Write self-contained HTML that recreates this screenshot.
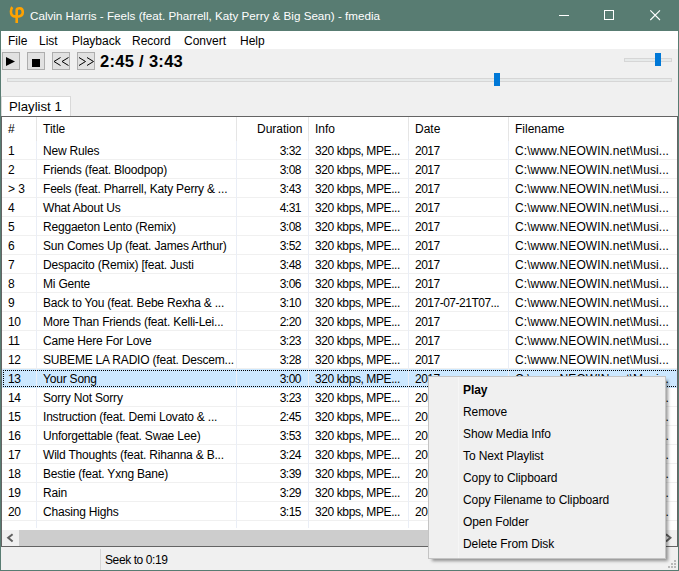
<!DOCTYPE html>
<html><head><meta charset="utf-8">
<style>
*{margin:0;padding:0;box-sizing:border-box}
html,body{width:679px;height:571px;overflow:hidden;background:#f0f0f0}
body{position:relative;font-family:"Liberation Sans",sans-serif;font-size:12px;color:#000}
.abs{position:absolute}
#win{position:absolute;left:0;top:0;width:679px;height:571px;background:#f0f0f0}
.bd{position:absolute;background:#587c72}
#title{position:absolute;left:0;top:0;width:679px;height:31px;background:#587c72}
#title .t{position:absolute;left:30px;top:8px;color:#fff;font-size:11.65px;white-space:nowrap;line-height:15px}
#menubar{position:absolute;left:1px;top:31px;width:677px;height:18px;background:#fff}
#menubar span{position:absolute;top:3px;line-height:14px;white-space:nowrap;font-size:12px}
.btn{position:absolute;top:52px;width:18px;height:18px;background:#e1e1e1;border:1px solid #adadad}
.track{position:absolute;height:4px;background:#e7eaea;border:1px solid #d6d6d6}
.thumb{position:absolute;width:6px;height:13px;background:#0078d7}
#time{position:absolute;left:100px;top:52px;font-weight:bold;font-size:16.5px;letter-spacing:0.3px;line-height:18px;white-space:nowrap}
#tab{position:absolute;left:1px;top:96px;width:70px;height:21px;background:#fff;border:1px solid #d9d9d9;border-bottom:none}
#tab span{position:absolute;left:7px;top:2px;line-height:15px;font-size:13.2px;white-space:nowrap}
#lv{position:absolute;left:1px;top:116px;width:677px;height:431px;background:#fff;border:1px solid #646464}
.hdr{position:absolute;top:123px;line-height:12px;white-space:nowrap}
.hsep{position:absolute;top:117px;width:1px;height:24px;background:#e5e5e5}
.vg{position:absolute;top:141px;width:1px;height:387px;background:#eaeef6}
#rows{position:absolute;left:2px;top:117px;width:675px;height:413px;overflow:hidden}
.row{position:absolute;left:0;width:700px;height:19px;border-bottom:1px solid #f0f0f0}
.row span{position:absolute;top:4px;line-height:12px;white-space:nowrap}
.row.sel{background:#cce8ff;border-bottom:none}
.row.sel:after{content:'';position:absolute;left:1px;top:1px;right:0;bottom:1px;border:1px dotted #000;border-radius:1px}
.c0{left:6px;letter-spacing:-0.5px} .c1{left:41px;letter-spacing:-0.2px} .c2{right:401px;letter-spacing:-0.5px} .c3{left:313px;letter-spacing:-0.4px} .c4{left:413px;letter-spacing:-0.5px} .c5{left:513px;letter-spacing:0.08px}
#hscroll{position:absolute;left:2px;top:530px;width:675px;height:16px;background:#f0f0f0}
#hthumb{position:absolute;left:17px;top:0;width:640px;height:16px;background:#cdcdcd}
#status{position:absolute;left:1px;top:547px;width:677px;height:23px;background:#f0f0f0}
#ssep{position:absolute;left:99px;top:2px;width:1px;height:21px;background:#d7d7d7}
#status span{position:absolute;left:104px;top:7px;line-height:13px;white-space:nowrap;letter-spacing:-0.4px}
#cm{position:absolute;left:428px;top:376px;width:238px;height:183px;background:#f0f0f0;border:1px solid #c4c4c4;box-shadow:3px 3px 3px -1px rgba(0,0,0,0.4)}
.mi{position:absolute;left:34px;height:22px;line-height:22px;white-space:nowrap;letter-spacing:-0.1px}
.mi.b{font-weight:bold}
</style></head><body>
<div id="win">
<div id="title">
 <svg class="abs" style="left:0;top:0" width="30" height="30" viewBox="0 0 30 30">
  <path d="M12.3 7.1 C10.6 9.2 10.6 13.5 11.9 15.1 C13 16.4 14.8 16.7 16.7 16.6 M16.7 23 L16.7 10 C16.7 8.7 18 8.2 19.7 8.2 C21.8 8.2 22.8 10 22.8 12.2 C22.8 15 20.6 16.6 16.7 16.6" fill="none" stroke="#ffa200" stroke-width="2.6"/>
 </svg>
 <div class="t">Calvin Harris - Feels (feat. Pharrell, Katy Perry &amp; Big Sean) - fmedia</div>
 <div class="abs" style="left:559px;top:15px;width:10px;height:1px;background:#fff"></div>
 <div class="abs" style="left:604px;top:10px;width:10px;height:10px;border:1px solid #fff"></div>
 <svg class="abs" style="left:649px;top:9px" width="13" height="13" viewBox="0 0 13 13"><path d="M1.3 1.3 L11 11 M11 1.3 L1.3 11" stroke="#fff" stroke-width="1.1"/></svg>
</div>
<div id="menubar">
 <span style="left:7px">File</span><span style="left:38px">List</span><span style="left:71px">Playback</span>
 <span style="left:131px">Record</span><span style="left:183px">Convert</span><span style="left:239px">Help</span>
</div>
<div class="btn" style="left:2px"></div><div class="btn" style="left:27px"></div><div class="btn" style="left:52px"></div><div class="btn" style="left:77px"></div>
<svg class="abs" style="left:0;top:0" width="100" height="80" viewBox="0 0 100 80">
 <path d="M6 57 L15 61.5 L6 66Z" fill="#000"/>
 <rect x="32" y="59" width="8" height="8" fill="#000"/>
 <path d="M60.5 57.5 L54 61.5 L60.5 65.5 M68.5 57.5 L62 61.5 L68.5 65.5 M79 57.5 L85.5 61.5 L79 65.5 M87 57.5 L93.5 61.5 L87 65.5" fill="none" stroke="#000" stroke-width="1"/>
</svg>
<div id="time">2:45 / 3:43</div>
<div class="track" style="left:624px;top:58px;width:48px"></div>
<div class="thumb" style="left:655px;top:53px"></div>
<div class="track" style="left:7px;top:78px;width:665px"></div>
<div class="thumb" style="left:494px;top:73px"></div>
<div id="tab"><span>Playlist 1</span></div>
<div id="lv"></div>
<span class="hdr" style="left:8px">#</span>
<span class="hdr" style="left:43px">Title</span>
<span class="hdr" style="left:257px">Duration</span>
<span class="hdr" style="left:315px">Info</span>
<span class="hdr" style="left:415px">Date</span>
<span class="hdr" style="left:515px">Filename</span>
<div class="hsep" style="left:36px"></div><div class="hsep" style="left:236px"></div><div class="hsep" style="left:308px"></div><div class="hsep" style="left:408px"></div><div class="hsep" style="left:508px"></div>
<div id="rows">
<div class="row" style="top:24px"><span class="c0">1</span><span class="c1">New Rules</span><span class="c2">3:32</span><span class="c3">320 kbps, MPE...</span><span class="c4">2017</span><span class="c5">C:\www.NEOWIN.net\Musi...</span></div>
<div class="row" style="top:43px"><span class="c0">2</span><span class="c1">Friends (feat. Bloodpop)</span><span class="c2">3:08</span><span class="c3">320 kbps, MPE...</span><span class="c4">2017</span><span class="c5">C:\www.NEOWIN.net\Musi...</span></div>
<div class="row" style="top:62px"><span class="c0" style="letter-spacing:0">&gt; 3</span><span class="c1">Feels (feat. Pharrell, Katy Perry &amp; ...</span><span class="c2">3:43</span><span class="c3">320 kbps, MPE...</span><span class="c4">2017</span><span class="c5">C:\www.NEOWIN.net\Musi...</span></div>
<div class="row" style="top:81px"><span class="c0">4</span><span class="c1">What About Us</span><span class="c2">4:31</span><span class="c3">320 kbps, MPE...</span><span class="c4">2017</span><span class="c5">C:\www.NEOWIN.net\Musi...</span></div>
<div class="row" style="top:100px"><span class="c0">5</span><span class="c1">Reggaeton Lento (Remix)</span><span class="c2">3:08</span><span class="c3">320 kbps, MPE...</span><span class="c4">2017</span><span class="c5">C:\www.NEOWIN.net\Musi...</span></div>
<div class="row" style="top:119px"><span class="c0">6</span><span class="c1">Sun Comes Up (feat. James Arthur)</span><span class="c2">3:52</span><span class="c3">320 kbps, MPE...</span><span class="c4">2017</span><span class="c5">C:\www.NEOWIN.net\Musi...</span></div>
<div class="row" style="top:138px"><span class="c0">7</span><span class="c1">Despacito (Remix) [feat. Justi</span><span class="c2">3:48</span><span class="c3">320 kbps, MPE...</span><span class="c4">2017</span><span class="c5">C:\www.NEOWIN.net\Musi...</span></div>
<div class="row" style="top:157px"><span class="c0">8</span><span class="c1">Mi Gente</span><span class="c2">3:06</span><span class="c3">320 kbps, MPE...</span><span class="c4">2017</span><span class="c5">C:\www.NEOWIN.net\Musi...</span></div>
<div class="row" style="top:176px"><span class="c0">9</span><span class="c1">Back to You (feat. Bebe Rexha &amp; ...</span><span class="c2">3:10</span><span class="c3">320 kbps, MPE...</span><span class="c4">2017-07-21T07...</span><span class="c5">C:\www.NEOWIN.net\Musi...</span></div>
<div class="row" style="top:195px"><span class="c0">10</span><span class="c1">More Than Friends (feat. Kelli-Lei...</span><span class="c2">2:20</span><span class="c3">320 kbps, MPE...</span><span class="c4">2017</span><span class="c5">C:\www.NEOWIN.net\Musi...</span></div>
<div class="row" style="top:214px"><span class="c0">11</span><span class="c1">Came Here For Love</span><span class="c2">3:23</span><span class="c3">320 kbps, MPE...</span><span class="c4">2017</span><span class="c5">C:\www.NEOWIN.net\Musi...</span></div>
<div class="row" style="top:233px"><span class="c0">12</span><span class="c1">SUBEME LA RADIO (feat. Descem...</span><span class="c2">3:28</span><span class="c3">320 kbps, MPE...</span><span class="c4">2017</span><span class="c5">C:\www.NEOWIN.net\Musi...</span></div>
<div class="row sel" style="top:252px"><span class="c0">13</span><span class="c1">Your Song</span><span class="c2">3:00</span><span class="c3">320 kbps, MPE...</span><span class="c4">2017</span><span class="c5">C:\www.NEOWIN.net\Musi...</span></div>
<div class="row" style="top:271px"><span class="c0">14</span><span class="c1">Sorry Not Sorry</span><span class="c2">3:23</span><span class="c3">320 kbps, MPE...</span><span class="c4">2017</span><span class="c5">C:\www.NEOWIN.net\Musi...</span></div>
<div class="row" style="top:290px"><span class="c0">15</span><span class="c1">Instruction (feat. Demi Lovato &amp; ...</span><span class="c2">2:45</span><span class="c3">320 kbps, MPE...</span><span class="c4">2017</span><span class="c5">C:\www.NEOWIN.net\Musi...</span></div>
<div class="row" style="top:309px"><span class="c0">16</span><span class="c1">Unforgettable (feat. Swae Lee)</span><span class="c2">3:53</span><span class="c3">320 kbps, MPE...</span><span class="c4">2017</span><span class="c5">C:\www.NEOWIN.net\Musi...</span></div>
<div class="row" style="top:328px"><span class="c0">17</span><span class="c1">Wild Thoughts (feat. Rihanna &amp; B...</span><span class="c2">3:24</span><span class="c3">320 kbps, MPE...</span><span class="c4">2017</span><span class="c5">C:\www.NEOWIN.net\Musi...</span></div>
<div class="row" style="top:347px"><span class="c0">18</span><span class="c1">Bestie (feat. Yxng Bane)</span><span class="c2">3:39</span><span class="c3">320 kbps, MPE...</span><span class="c4">2017</span><span class="c5">C:\www.NEOWIN.net\Musi...</span></div>
<div class="row" style="top:366px"><span class="c0">19</span><span class="c1">Rain</span><span class="c2">3:29</span><span class="c3">320 kbps, MPE...</span><span class="c4">2017</span><span class="c5">C:\www.NEOWIN.net\Musi...</span></div>
<div class="row" style="top:385px"><span class="c0">20</span><span class="c1">Chasing Highs</span><span class="c2">3:15</span><span class="c3">320 kbps, MPE...</span><span class="c4">2017</span><span class="c5">C:\www.NEOWIN.net\Musi...</span></div>
</div>
<div class="vg" style="left:36px"></div><div class="vg" style="left:236px"></div><div class="vg" style="left:308px"></div><div class="vg" style="left:408px"></div><div class="vg" style="left:508px"></div>
<div id="hscroll"><svg class="abs" style="left:3px;top:3px" width="10" height="10"><path d="M7.6 1.2 L3.2 4.8 L7.6 8.4" fill="none" stroke="#606060" stroke-width="2"/></svg><div id="hthumb"></div><svg class="abs" style="left:662px;top:3px" width="10" height="10"><path d="M2 1.2 L6.4 4.8 L2 8.4" fill="none" stroke="#606060" stroke-width="2"/></svg></div>
<div id="status"><div id="ssep"></div><svg class="abs" style="left:0;top:0" width="677" height="23"><g fill="#b9b9b9"><rect x="673" y="13" width="2" height="2"/><rect x="670" y="16" width="2" height="2"/><rect x="673" y="16" width="2" height="2"/><rect x="667" y="19" width="2" height="2"/><rect x="670" y="19" width="2" height="2"/><rect x="673" y="19" width="2" height="2"/></g></svg><span>Seek to 0:19</span></div>
<div class="bd" style="left:0;top:0;width:1px;height:571px"></div><div class="bd" style="left:678px;top:0;width:1px;height:571px"></div><div class="bd" style="left:0;top:570px;width:679px;height:1px"></div>
<div id="cm">
<div class="abs" style="left:29px;top:0;width:1px;height:181px;background:#f6f6f6"></div>
<div class="mi b" style="top:2px">Play</div>
<div class="mi" style="top:24px">Remove</div>
<div class="mi" style="top:46px">Show Media Info</div>
<div class="mi" style="top:68px">To Next Playlist</div>
<div class="mi" style="top:90px">Copy to Clipboard</div>
<div class="mi" style="top:112px">Copy Filename to Clipboard</div>
<div class="mi" style="top:134px">Open Folder</div>
<div class="mi" style="top:156px">Delete From Disk</div>
</div>
</div>
</body></html>
